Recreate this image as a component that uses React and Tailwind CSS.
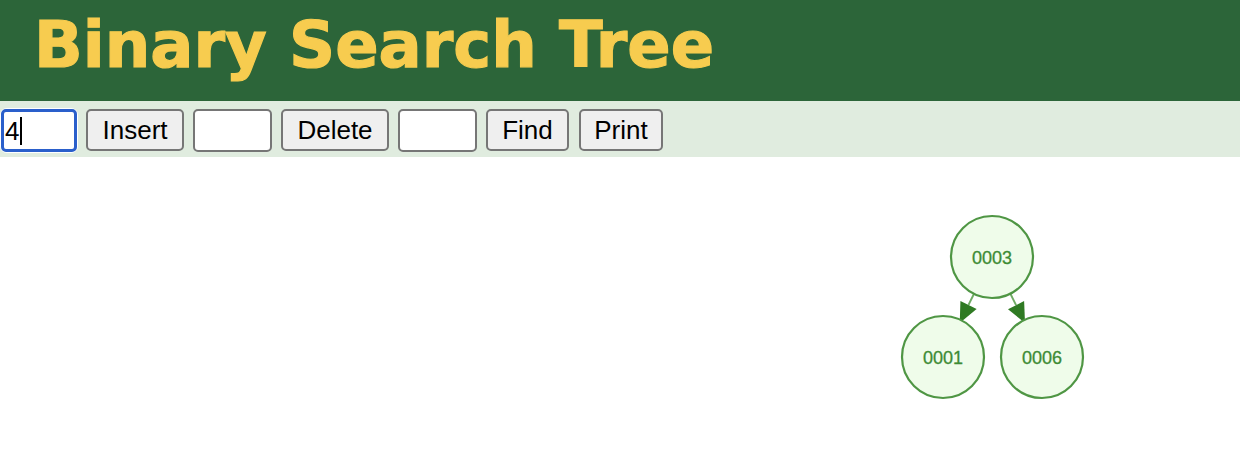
import React from "react";

const R = 41;
const nodes = [
  { id: "0003", x: 992, y: 100 },
  { id: "0001", x: 943, y: 200 },
  { id: "0006", x: 1042, y: 200 },
];
const edges = [
  [0, 1],
  [0, 2],
];

function Edge({ a, b }) {
  const dx = b.x - a.x;
  const dy = b.y - a.y;
  const len = Math.hypot(dx, dy);
  const ux = dx / len;
  const uy = dy / len;
  const sx = a.x + ux * R;
  const sy = a.y + uy * R;
  const tx = b.x - ux * (R - 3);
  const ty = b.y - uy * (R - 3);
  const head = 20;
  const half = 9;
  const bx = tx - ux * head;
  const by = ty - uy * head;
  const nx = -uy;
  const ny = ux;
  const pts = `${tx},${ty} ${bx + nx * half},${by + ny * half} ${bx - nx * half},${by - ny * half}`;
  return (
    <g>
      <line x1={sx} y1={sy} x2={bx} y2={by} stroke="#6fab64" strokeWidth="2" />
      <polygon points={pts} fill="#2f7a23" />
    </g>
  );
}

const btn =
  "mt-[1px] h-[42px] flex items-center justify-center bg-[#efefef] border-2 border-[#767676] rounded-[5px] text-[26px] leading-none text-black font-['Liberation_Sans',Arial,sans-serif]";
const inp = "mt-[1px] h-[43px] w-[79px] ml-[9px] bg-white border-2 border-[#767676] rounded-[5px]";

export default function App() {
  return (
    <div className="w-[1240px] h-[460px] bg-white overflow-hidden">
      <div className="h-[101px] bg-[#2c6539] pl-[34px] pt-[13px] flex items-start">
        <h1 className="text-[64px] font-bold leading-none text-[#f7cc4f] [-webkit-text-stroke:1.2px_#f7cc4f] font-['DejaVu_Sans',Verdana,sans-serif]">
          Binary Search Tree
        </h1>
      </div>
      <div className="h-[56px] bg-[#e0ecdf] flex items-start pt-[7px]">
        <div className="w-[78px] h-[45px] bg-white rounded-[7px] p-[1px]">
          <div className="w-full h-full border-[3px] border-[#2a5fcb] rounded-[5px] flex items-center pl-[1px] text-[26px] leading-none text-black font-['Liberation_Sans',Arial,sans-serif]">
            <span>4</span>
            <span className="w-[2px] h-[28px] bg-black ml-[1px]"></span>
          </div>
        </div>
        <button className={btn + " w-[98px] ml-[8px]"}>Insert</button>
        <div className={inp}></div>
        <button className={btn + " w-[108px] ml-[9px]"}>Delete</button>
        <div className={inp}></div>
        <button className={btn + " w-[83px] ml-[9px]"}>Find</button>
        <button className={btn + " w-[84px] ml-[10px]"}>Print</button>
      </div>
      <div className="relative h-[303px]">
        <svg className="absolute inset-0" width="1240" height="303" viewBox="0 0 1240 303">
          {edges.map(([i, j]) => (
            <Edge key={i + "-" + j} a={nodes[i]} b={nodes[j]} />
          ))}
          {nodes.map((n) => (
            <g key={n.id}>
              <circle cx={n.x} cy={n.y} r={R} fill="#effcea" stroke="#4f9644" strokeWidth="2.2" />
              <text
                x={n.x}
                y={n.y + 1}
                textAnchor="middle"
                dominantBaseline="central"
                fontFamily="'Liberation Sans', Arial, sans-serif"
                fontSize="18"
                fill="#3d8b34"
                stroke="#3d8b34"
                strokeWidth="0.3"
              >
                {n.id}
              </text>
            </g>
          ))}
        </svg>
      </div>
    </div>
  );
}
